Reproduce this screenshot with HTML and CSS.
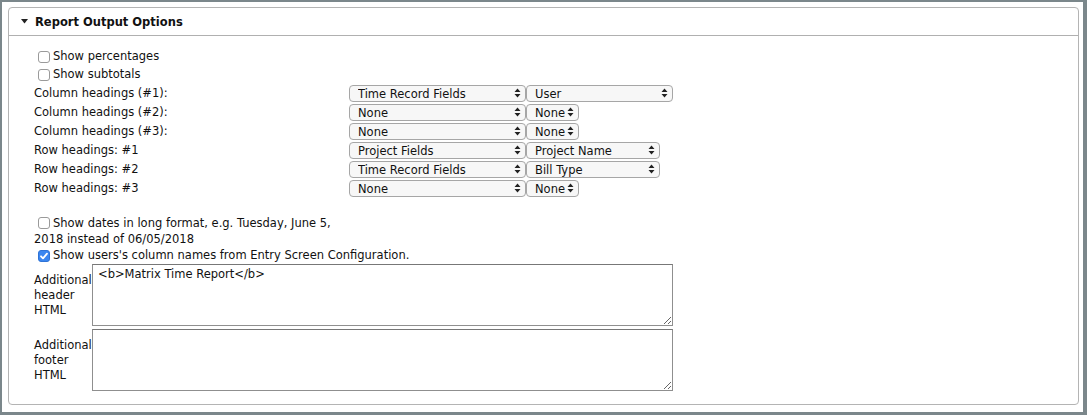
FILE: index.html
```html
<!DOCTYPE html>
<html>
<head>
<meta charset="utf-8">
<link rel="stylesheet" href="styles.css">
</head>
<body>
<div class="page">
  <div class="panel">
    <div class="panel-head">
      <svg class="tri" width="7" height="5" viewBox="0 0 7 5"><path d="M0 0H7L3.5 4.5Z" fill="#222"/></svg>
      <span class="title">Report Output Options</span>
    </div>
    <div class="panel-body">
      <label class="check"><input type="checkbox"><span>Show percentages</span></label>
      <label class="check"><input type="checkbox"><span>Show subtotals</span></label>

      <div class="grid">
        <div class="lbl">Column headings (#1):</div>
        <div class="sels"><select class="s1"><option>Time Record Fields</option></select><select class="s2 w-user"><option>User</option></select></div>
        <div class="lbl">Column headings (#2):</div>
        <div class="sels"><select class="s1"><option>None</option></select><select class="s2 w-none"><option>None</option></select></div>
        <div class="lbl">Column headings (#3):</div>
        <div class="sels"><select class="s1"><option>None</option></select><select class="s2 w-none"><option>None</option></select></div>
        <div class="lbl">Row headings: #1</div>
        <div class="sels"><select class="s1"><option>Project Fields</option></select><select class="s2 w-proj"><option>Project Name</option></select></div>
        <div class="lbl">Row headings: #2</div>
        <div class="sels"><select class="s1"><option>Time Record Fields</option></select><select class="s2 w-proj"><option>Bill Type</option></select></div>
        <div class="lbl">Row headings: #3</div>
        <div class="sels"><select class="s1"><option>None</option></select><select class="s2 w-none"><option>None</option></select></div>
      </div>

      <div class="dates"><input type="checkbox">Show dates in long format, e.g. Tuesday, June 5, 2018 instead of 06/05/2018</div>
      <label class="check users"><input type="checkbox" checked><span>Show users's column names from Entry Screen Configuration.</span></label>

      <div class="ta-row">
        <div class="ta-lbl">Additional header HTML</div>
        <textarea>&lt;b&gt;Matrix Time Report&lt;/b&gt;</textarea>
      </div>
      <div class="ta-row">
        <div class="ta-lbl">Additional footer HTML</div>
        <textarea></textarea>
      </div>
    </div>
  </div>
</div>
</body>
</html>
```
FILE: styles.css
```css
html, body {
  margin: 0;
  padding: 0;
  background: #7b878b;
}
body {
  width: 1087px;
  height: 415px;
  overflow: hidden;
  font-family: "DejaVu Sans", Verdana, sans-serif;
  font-size: 11.5px;
  color: #111;
}
.page {
  margin: 2px 4px 0 2px;
  height: 410px;
  background: #fff;
  padding: 5px 0 0 6px;
  box-sizing: border-box;
}
.panel {
  width: 1071px;
  height: 398px;
  border: 1px solid #b4b4b4;
  border-radius: 4px;
  box-sizing: border-box;
}
.panel-head {
  height: 28px;
  border-bottom: 1px solid #b0b0b0;
  display: flex;
  align-items: center;
  box-sizing: border-box;
  padding-left: 12px;
}
.tri { margin-right: 7px; }
.title {
  font-weight: bold;
  font-size: 11.5px;
  color: #111;
}
.panel-body {
  padding: 11px 0 0 25px;
}
.check {
  display: flex;
  align-items: center;
  height: 18px;
}
.check.users { height: 16px; margin-bottom: 1px; }
input[type=checkbox] {
  appearance: none;
  -webkit-appearance: none;
  width: 12px;
  height: 12px;
  margin: 2px 3px 0 4px;
  border: 1px solid #9a9a9a;
  border-radius: 3px;
  background: #fff;
  box-sizing: border-box;
  flex: none;
}
input[type=checkbox]:checked {
  background: #3a86f0;
  border-color: #2f73d6;
  background-image: url("data:image/svg+xml,%3Csvg xmlns='http://www.w3.org/2000/svg' width='12' height='12' viewBox='0 0 12 12'%3E%3Cpath d='M3 6.3L5 8.4L9 3.6' stroke='white' stroke-width='1.8' fill='none' stroke-linecap='round' stroke-linejoin='round'/%3E%3C/svg%3E");
  background-repeat: no-repeat;
  background-position: center;
}
.grid {
  display: grid;
  grid-template-columns: 315px auto;
  grid-auto-rows: 19px;
  align-items: center;
}
.lbl { padding-top: 1px; }
.sels {
  display: flex;
  align-items: center;
  padding-top: 1px;
}
select {
  appearance: none;
  -webkit-appearance: none;
  height: 17px;
  border: 1px solid #a6a6a6;
  border-radius: 4px;
  background-color: #f7f7f7;
  background-image: url("data:image/svg+xml,%3Csvg xmlns='http://www.w3.org/2000/svg' width='7' height='10' viewBox='0 0 7 10'%3E%3Cpath d='M3.5 0.5L6.5 4H0.5Z M3.5 9.5L6.5 6H0.5Z' fill='%23222'/%3E%3C/svg%3E");
  background-repeat: no-repeat;
  background-position: right 4px center;
  font-family: "DejaVu Sans", Verdana, sans-serif;
  font-size: 11.5px;
  color: #111;
  padding: 1px 10px 0 8px;
  margin: 0;
  box-sizing: border-box;
  line-height: 14px;
}
.s1 { width: 177px; }
.w-user { width: 147px; }
.w-none { width: 53px; padding-left: 8px; padding-right: 4px; }
.w-proj { width: 134px; }
.dates {
  width: 315px;
  margin-top: 18px;
  line-height: 16px;
}
.dates input {
  vertical-align: -2px;
  margin-top: 0;
}
.ta-row {
  display: flex;
  align-items: center;
  margin-top: 3px;
}
.users + .ta-row { margin-top: 0; }
.ta-lbl {
  width: 58px;
  line-height: 15px;
  flex: none;
}
textarea {
  width: 581px;
  height: 62px;
  margin: 0;
  border: 1px solid #8f8f8f;
  border-top-color: #777;
  box-sizing: border-box;
  font-family: "DejaVu Sans", Verdana, sans-serif;
  font-size: 11.5px;
  padding: 2px 5px;
  resize: both;
  color: #111;
}
```
